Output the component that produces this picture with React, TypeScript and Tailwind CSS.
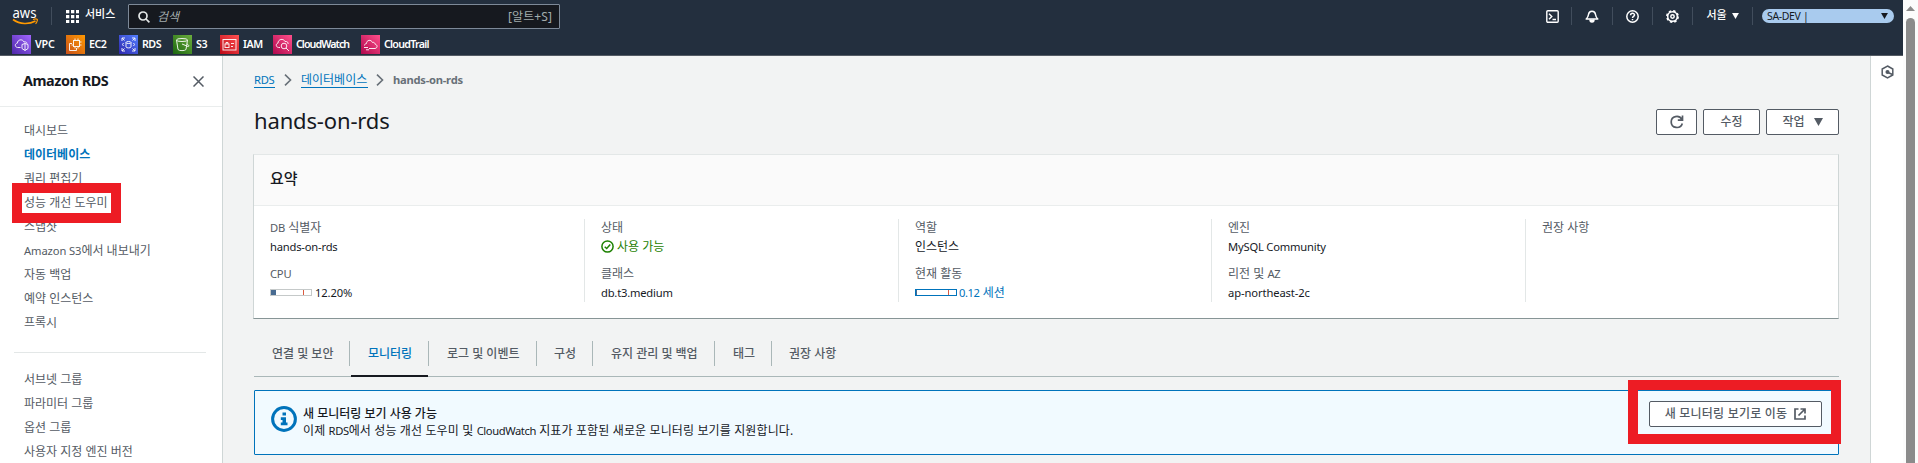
import React from "react";

type Kids = { children?: React.ReactNode };

const services = [
  { name: "VPC", w: "w-[54px]", track: "tracking-[-0.2px]", from: "#4d27a8", to: "#a166ff", icon: "vpc" },
  { name: "EC2", w: "w-[53px]", track: "tracking-[-0.5px]", from: "#c8511b", to: "#ff9900", icon: "ec2" },
  { name: "RDS", w: "w-[54px]", track: "tracking-[-0.5px]", from: "#2e27ad", to: "#527fff", icon: "rds" },
  { name: "S3", w: "w-[47px]", track: "tracking-[-0.5px]", from: "#1b660f", to: "#6cae3e", icon: "s3" },
  { name: "IAM", w: "w-[53px]", track: "tracking-[-0.5px]", from: "#bd0816", to: "#ff5252", icon: "iam" },
  { name: "CloudWatch", w: "w-[88px]", track: "tracking-[-0.95px]", from: "#b0084d", to: "#ff4f8b", icon: "cw" },
  { name: "CloudTrail", w: "w-[80px]", track: "tracking-[-0.75px]", from: "#b0084d", to: "#ff4f8b", icon: "ct" },
];

const glyphs: Record<string, React.ReactNode> = {
  vpc: (
    <>
      <path d="M8.500 12.500H5.500C2.500 12 2.700 8.500 5.300 8.200C5.500 4.500 10.500 3.500 12 7C14 6.500 15 7.500 15 8.500" />
      <path d="M10 9.500L13 8.500L16 9.500V13.500L13 15.500L10 13.500ZM13 8.500V15.500" />
    </>
  ),
  ec2: (
    <>
      <rect x="7.500" y="5.500" width="6" height="6" />
      <path d="M9 5.500V3.500M12 5.500V3.500M13.500 7H15.500M13.500 10H15.500M5.500 10H7.500M9 11.500V13.500M12 11.500V13.500" />
      <path d="M6 8.500H3.500V15.500H10.500V13" />
    </>
  ),
  rds: (
    <>
      <path d="M3 6V3H6M3 3L5.500 5.500M13 3H16V6M16 3L13.500 5.500M3 13V16H6M3 16L5.500 13.500M13 16H16V13M16 16L13.500 13.500" />
      <ellipse cx="9.500" cy="7.500" rx="2.500" ry="1" />
      <path d="M7 7.500V12C7 13.200 12 13.200 12 12V7.500M4.500 8L3.500 9.500L4.500 11M14.500 8L15.500 9.500L14.500 11" />
    </>
  ),
  s3: (
    <>
      <ellipse cx="9" cy="5" rx="5.500" ry="1.500" />
      <path d="M3.500 5L5 14.500C6 16 12 16 13 14.500L14.500 5M9 9L15 11.500C16.500 11.500 16 10 14 9" />
    </>
  ),
  iam: (
    <>
      <rect x="3" y="4.500" width="13" height="10.500" />
      <rect x="5" y="9" width="4" height="3.500" />
      <path d="M6 9V7.500H8V9M11 8.500H14M11 11.500H13" />
    </>
  ),
  cw: (
    <>
      <path d="M7 12.500H5.500C2.500 12 2.700 8.500 5 8.200C5 4 10.500 3 12 6.500C14.500 6 15.500 8 15 9" />
      <circle cx="11" cy="11" r="2.800" />
      <path d="M13 13L16 16" />
    </>
  ),
  ct: (
    <>
      <path d="M8 13.500H14C17 13 16.500 9.500 14 9.200C14 7.500 12.500 7 11.500 7.500C10 4 5.500 5 5.500 8.500C4 8.800 3.500 9.500 3.500 10.500" />
      <path d="M3 12.500H7M5 14.800H8" />
    </>
  ),
};

function ServiceIcon({ id, from, to }: { id: string; from: string; to: string }) {
  return (
    <svg width="19" height="19" viewBox="0 0 19 19" className="shrink-0">
      <defs>
        <linearGradient id={"g-" + id} x1="0" y1="1" x2="1" y2="0">
          <stop offset="0" stopColor={from} />
          <stop offset="1" stopColor={to} />
        </linearGradient>
      </defs>
      <rect width="19" height="19" fill={"url(#g-" + id + ")"} />
      <g fill="none" stroke="#fff" strokeWidth="1" opacity="0.9">{glyphs[id]}</g>
    </svg>
  );
}

function TopCell({ w, children }: Kids & { w: string }) {
  return (
    <div className={"flex h-[18px] shrink-0 items-center border-l border-[#414d5c] " + w}>{children}</div>
  );
}

function Caret({ className }: { className: string }) {
  return (
    <svg viewBox="0 0 8 7" className={className} fill="currentColor">
      <path d="M0 0H8L4 7Z" />
    </svg>
  );
}

function Header() {
  return (
    <header className="h-[56px] w-[1903px] border-b border-[#545b64] bg-[#232f3e] text-white">
      <div className="flex h-[32px] items-center pl-[12px]">
        <svg width="27" height="28" viewBox="0 -4 27 28" className="shrink-0">
          <text x="0.500" y="11.500" fontSize="14" textLength="24" lengthAdjust="spacingAndGlyphs" fill="#fff" fontFamily="Noto Sans">aws</text>
          <path d="M1 13.500C8 18.500 17 18.500 23.500 15" fill="none" stroke="#f90" strokeWidth="1.600" />
          <path d="M21 13.500C24 12.500 26 13 25.300 14.500C25 16 24.500 17 23.500 17.800" fill="none" stroke="#f90" strokeWidth="1.200" />
        </svg>
        <div className="ml-[12px] h-[18px] w-px bg-[#414d5c]" />
        <svg width="13" height="13" viewBox="0 0 13 13" className="ml-[14px] shrink-0" fill="#fff">
          {[0, 5, 10].map((y) => [0, 5, 10].map((x) => <rect key={x + "-" + y} x={x} y={y} width="3.300" height="3.300" />))}
        </svg>
        <span className="ml-[6px] w-[43px] pb-[4px] text-[11px] leading-4 font-medium">서비스</span>
        <div className="mt-px flex h-[25px] w-[432px] items-center rounded-[1px] border border-[#7d8998] bg-[#16191f] pr-[7px] pl-[9px] text-[#a3adad]">
          <svg width="12" height="12" viewBox="0 0 12 12" fill="none" stroke="#e3e7e7" strokeWidth="1.700">
            <circle cx="5" cy="5" r="4" />
            <path d="M8 8L11.400 11.400" />
          </svg>
          <span className="ml-[7px] flex-1 text-[12px] leading-4 italic">검색</span>
          <span className="text-[12px] leading-4 tracking-[0.1px]">[알트+S]</span>
        </div>
        <div className="ml-auto flex items-center pr-[9px]">
          <div className="flex w-[38px] justify-center">
            <svg width="13" height="13" viewBox="0 0 13 13" fill="none" stroke="#fff" strokeWidth="1.400">
              <rect x="0.800" y="0.800" width="11.400" height="11.400" rx="1" />
              <path d="M3 3.700L5.800 6.400L3 9.200M6.500 9.500H10" />
            </svg>
          </div>
          <TopCell w="w-[41px] justify-center">
            <svg width="14" height="13" viewBox="0 0 14 13" fill="none" stroke="#fff" strokeWidth="1.500">
              <path d="M1.200 9H12.800C11 7.500 10.800 6.500 10.500 4.500C10 0.200 4 0.200 3.500 4.500C3.200 6.500 3 7.500 1.200 9Z" strokeLinejoin="round" />
              <path d="M5 9.500C5 12.800 9 12.800 9 9.500" fill="#fff" />
            </svg>
          </TopCell>
          <TopCell w="w-[40px] justify-center">
            <svg width="13" height="13" viewBox="0 0 13 13" fill="none" stroke="#fff" strokeWidth="1.500">
              <circle cx="6.500" cy="6.500" r="5.700" />
              <path d="M4.600 5.200C4.600 2.700 8.500 2.800 8.500 5C8.500 6.400 6.500 6.300 6.500 8M6.500 9V10.300" />
            </svg>
          </TopCell>
          <TopCell w="w-[40px] justify-center">
            <svg width="13" height="13" viewBox="0 0 13 13" fill="none" stroke="#fff">
              <circle cx="6.500" cy="6.500" r="4.800" strokeWidth="1.500" />
              <circle cx="6.500" cy="6.500" r="5.600" strokeWidth="1.700" strokeDasharray="2.400 2" />
              <circle cx="6.500" cy="6.500" r="1.700" strokeWidth="1.500" />
            </svg>
          </TopCell>
          <TopCell w="w-[60px] justify-center">
            <span className="pb-[2px] text-[11px] leading-4 font-medium">서울</span>
            <Caret className="ml-[5px] h-[6px] w-[7px]" />
          </TopCell>
          <TopCell w="w-[142px] pl-[9px]">
            <div className="flex h-[14px] w-[132px] items-center rounded-full bg-[#a9cbee] pr-[6px] pl-[5px] text-[#16191f]">
              <span className="flex-1 text-[10.500px] leading-[14px] tracking-[-0.350px]">SA-DEV |</span>
              <Caret className="h-[6px] w-[7px]" />
            </div>
          </TopCell>
        </div>
      </div>
      <div className="flex h-[23px] items-center pt-px pl-[12px]">
        {services.map((s) => (
          <div key={s.name} className={"flex h-[19px] shrink-0 items-center gap-[4px] text-[10.700px] leading-4 font-semibold " + s.w}>
            <ServiceIcon id={s.icon} from={s.from} to={s.to} />
            <span className={"pb-px " + s.track}>{s.name}</span>
          </div>
        ))}
      </div>
    </header>
  );
}

const primaryNav = ["대시보드", "데이터베이스", "쿼리 편집기", "성능 개선 도우미", "스냅샷", "Amazon S3에서 내보내기", "자동 백업", "예약 인스턴스", "프록시"];
const secondaryNav = ["서브넷 그룹", "파라미터 그룹", "옵션 그룹", "사용자 지정 엔진 버전"];

function NavItem({ label }: { label: string }) {
  if (label === "데이터베이스") return <li className="font-bold text-[#0073bb]">{label}</li>;
  if (label.startsWith("Amazon S3"))
    return (
      <li>
        <span className="text-[11.200px] tracking-[-0.100px]">Amazon S3</span>
        {label.slice(9)}
      </li>
    );
  return <li>{label}</li>;
}

function Sidebar() {
  return (
    <aside className="w-[223px] shrink-0 border-r border-[#cfd6d6] bg-white">
      <div className="flex h-[51px] items-center justify-between border-b border-[#eaeded] pr-[18px] pl-[23px]">
        <h2 className="pb-px text-[14.400px] leading-5 font-bold tracking-[-0.450px] text-[#16191f]">Amazon RDS</h2>
        <svg width="11" height="11" viewBox="0 0 11 11" stroke="#545b64" strokeWidth="1.500">
          <path d="M0.500 0.500L10.500 10.500M10.500 0.500L0.500 10.500" />
        </svg>
      </div>
      <ul className="px-[24px] pt-[12px] text-[12px] leading-[24px] text-[#545b64]">
        {primaryNav.map((l) => <NavItem key={l} label={l} />)}
      </ul>
      <div className="mx-[14px] mt-[17px] h-px w-[192px] bg-[#e3e7e7]" />
      <ul className="px-[24px] pt-[15px] text-[12px] leading-[24px] text-[#545b64]">
        {secondaryNav.map((l) => <NavItem key={l} label={l} />)}
      </ul>
    </aside>
  );
}

function Chevron() {
  return (
    <svg width="8" height="12" viewBox="0 0 8 12" fill="none" stroke="#687078" strokeWidth="1.600">
      <path d="M1 0.700L6.500 6L1 11.300" />
    </svg>
  );
}

function Meter({ border, fill, w }: { border: string; fill: string; w: string }) {
  return (
    <span className={"flex h-[7px] w-[42px] border " + border}>
      <span className={"h-full " + fill + " " + w} />
      <span className="ml-auto mr-[7px] h-full w-px bg-[#d13212]/80" />
    </span>
  );
}

function Column({ w, first, items }: { w: string; first?: boolean; items: [React.ReactNode, React.ReactNode][] }) {
  return (
    <div className={"h-[83px] shrink-0 pl-[16px] " + (first ? "" : "border-l border-[#e3e7e7] ") + w}>
      {items.map(([label, value], i) => (
        <div key={i} className="h-[46px]">
          <div className="h-[18px] text-[12px] leading-[18px] text-[#545b64]">{label}</div>
          <div className="flex h-[19px] items-center text-[12px] leading-[19px] text-[#16191f]">{value}</div>
        </div>
      ))}
    </div>
  );
}

function Latin({ children }: Kids) {
  return <span className="text-[11.200px] tracking-[-0.200px]">{children}</span>;
}

function Summary() {
  return (
    <section className="mt-[19px] h-[165px] w-[1586px] border border-t-[#e3e7e7] border-r-[#cfd6d6] border-b-[#879596] border-l-[#cfd6d6] bg-white">
      <div className="flex h-[51px] items-center border-b border-[#eaeded] bg-[#fafafa] pl-[16px]">
        <h3 className="pb-[5px] text-[15px] leading-5 font-medium text-[#16191f]">요약</h3>
      </div>
      <div className="flex pt-[13px]">
        <Column first w="w-[330px]" items={[
          [<><Latin>DB</Latin> 식별자</>, <Latin>hands-on-rds</Latin>],
          [<Latin>CPU</Latin>, <><Meter border="border-[#c5c9c9]" fill="bg-[#486b91]" w="w-[5px]" /><span className="ml-[3px] text-[11.200px] tracking-[-0.100px]">12.20%</span></>],
        ]} />
        <Column w="w-[314px]" items={[
          ["상태", <span className="flex items-center text-[#1d8102]"><svg width="13" height="13" viewBox="0 0 13 13" fill="none" stroke="#1d8102" strokeWidth="1.500" className="mr-[3px]"><circle cx="6.500" cy="6.500" r="5.600" /><path d="M3.700 6.700L5.700 8.500L9.300 4.500" /></svg>사용 가능</span>],
          ["클래스", <Latin>db.t3.medium</Latin>],
        ]} />
        <Column w="w-[313px]" items={[
          ["역할", "인스턴스"],
          ["현재 활동", <><Meter border="border-[#0073bb]" fill="bg-[#486b91]" w="w-px" /><span className="ml-[2px] text-[#0073bb]"><span className="text-[11.200px] tracking-[-0.400px]">0.12</span> 세션</span></>],
        ]} />
        <Column w="w-[314px]" items={[
          ["엔진", <Latin>MySQL Community</Latin>],
          [<>리전 및 <Latin>AZ</Latin></>, <span className="text-[11.200px] tracking-[-0.100px]">ap-northeast-2c</span>],
        ]} />
        <Column w="w-[300px]" items={[["권장 사항", null]]} />
      </div>
    </section>
  );
}

const tabs = [
  { label: "연결 및 보안", w: "w-[96px]", pad: "pl-[18px]" },
  { label: "모니터링", w: "w-[79px]", pad: "pl-[18px]" },
  { label: "로그 및 이벤트", w: "w-[108px]", pad: "pl-[18px]" },
  { label: "구성", w: "w-[56px]", pad: "pl-[17px]" },
  { label: "유지 관리 및 백업", w: "w-[122px]", pad: "pl-[18px]" },
  { label: "태그", w: "w-[57px]", pad: "pl-[18px]" },
  { label: "권장 사항", w: "w-[90px]", pad: "pl-[17px]" },
];

function Tabs() {
  return (
    <nav className="ml-px mt-[22px] flex h-[36px] w-[1585px] border-b border-[#aab7b8]">
      {tabs.map((t, i) => (
        <div key={t.label} className={"flex h-[36px] shrink-0 flex-col justify-between " + t.w}>
          <div className={"h-[25px] border-r text-[12px] leading-[26px] font-medium " + t.pad + (i === tabs.length - 1 ? " border-transparent" : " border-[#aab7b8]") + (i === 1 ? " text-[#0073bb]" : " text-[#545b64]")}>{t.label}</div>
          {i === 1 && <div className="mr-px ml-px h-[2px] bg-[#16191f]" />}
        </div>
      ))}
    </nav>
  );
}

function Button({ w, children }: Kids & { w: string }) {
  return (
    <button className={"flex h-[26px] shrink-0 items-center justify-center rounded-[2px] border border-[#545b64] bg-white text-[12px] leading-4 font-medium text-[#545b64] " + w}>{children}</button>
  );
}

function Notice() {
  return (
    <section className="mt-[13px] ml-px flex h-[65px] w-[1585px] rounded-[1px] border border-[#0073bb] bg-[#f1faff] pr-[16px] pl-[16px] text-[#16191f]">
      <svg width="26" height="26" viewBox="0 0 26 26" className="mt-[15px] shrink-0" fill="#0073bb">
        <circle cx="13" cy="13" r="11.400" fill="none" stroke="#0073bb" strokeWidth="3" />
        <path d="M11.500 6.500H15V9.500H11.500ZM9.800 11.300H15V16.500H16.500V19.300H9.800V16.500H11.500V14H9.800Z" />
      </svg>
      <div className="mt-[14px] ml-[6px] flex-1 text-[12px] leading-[17px]">
        <p className="font-medium">새 모니터링 보기 사용 가능</p>
        <p className="tracking-[0.130px]">이제 <span className="text-[11.200px] tracking-[-0.400px]">RDS</span>에서 성능 개선 도우미 및 <span className="text-[11.200px] tracking-[-0.400px]">CloudWatch</span> 지표가 포함된 새로운 모니터링 보기를 지원합니다.</p>
      </div>
      <div className="mt-[10px]">
        <Button w="w-[173px]">
          <span className="pb-px tracking-[0.200px]">새 모니터링 보기로 이동</span>
          <svg width="12" height="12" viewBox="0 0 12 12" fill="none" stroke="#545b64" strokeWidth="1.700" className="ml-[7px]">
            <path d="M4.500 1H1V11H11V7.500M6.500 1H11V5.500M11 1L4.500 7.500" />
          </svg>
        </Button>
      </div>
    </section>
  );
}

export default function App() {
  return (
    <div className="relative flex h-[463px] w-[1918px] overflow-hidden bg-[#f2f3f3] font-['Noto_Sans','Noto_Sans_CJK_KR',sans-serif]">
      <div className="flex w-[1903px] shrink-0 flex-col">
        <Header />
        <div className="flex h-[407px]">
          <Sidebar />
          <main className="w-[1647px] shrink-0 pl-[30px]">
            <div className="mt-[14px] flex h-[18px] items-end pl-px text-[12px] leading-[15px]">
              <a className="w-[21px] border-b border-[#0073bb] text-[11.200px] tracking-[-0.300px] text-[#0073bb]">RDS</a>
              <span className="flex h-[17px] w-[26px] items-center pl-[9px]"><Chevron /></span>
              <a className="w-[67px] border-b border-[#0073bb] text-[#0073bb]">데이터베이스</a>
              <span className="flex h-[17px] w-[25px] items-center pl-[8px]"><Chevron /></span>
              <span className="pb-px text-[11.200px] font-bold tracking-[-0.250px] text-[#687078]">hands-on-rds</span>
            </div>
            <div className="mt-[21px] flex h-[26px] w-[1586px] items-center gap-[6px]">
              <h1 className="flex-1 pb-[5px] pl-px text-[22px] leading-[26px] tracking-[-0.150px] text-[#16191f]">hands-on-rds</h1>
              <Button w="w-[41px]">
                <svg width="14" height="14" viewBox="0 0 14 14" fill="none" stroke="#545b64" strokeWidth="1.700">
                  <path d="M12.300 8.500C10.500 14.500 1.200 13.500 1.200 7C1.200 1 9 -0.500 12 4.500M12.500 0.500V5.200H7.800" />
                </svg>
              </Button>
              <Button w="w-[57px]"><span className="pb-px">수정</span></Button>
              <Button w="w-[73px]"><span className="pb-px">작업</span><Caret className="ml-[9px] h-[8px] w-[9px]" /></Button>
            </div>
            <Summary />
            <Tabs />
            <Notice />
          </main>
          <div className="flex w-[33px] shrink-0 justify-center border-l border-[#cfd6d6] bg-white pt-[9px]">
            <svg width="13" height="14" viewBox="0 0 13 14" fill="none" stroke="#545b64" strokeWidth="1.500">
              <path d="M6.500 1L11.800 4V10L6.500 13L1.200 10V4Z" />
              <circle cx="6.500" cy="7" r="1.300" fill="#545b64" />
              <path d="M7 7.500L11.500 9.500" />
            </svg>
          </div>
        </div>
      </div>
      <div className="flex w-[15px] shrink-0 flex-col items-center bg-[#fcfcfc] pt-[6px]">
        <svg width="9" height="5" viewBox="0 0 9 5" fill="#8b8b8b"><path d="M4.500 0L9 5H0Z" /></svg>
        <div className="mt-[7px] w-[9px] flex-1 rounded-t-full bg-[#8b8b8b]" />
      </div>
      <div className="absolute top-[183px] left-[12px] h-[40px] w-[109px] border-[10px] border-[#ed1c24]" />
      <div className="absolute top-[380px] left-[1628px] h-[64px] w-[213px] border-[10px] border-[#ed1c24]" />
    </div>
  );
}
